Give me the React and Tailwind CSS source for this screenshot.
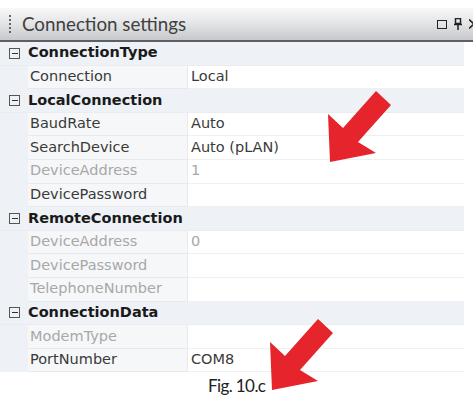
import React from 'react';

// property grid rows: category headers and name/value pairs
const rows = [
  { cat: 'ConnectionType' },
  { name: 'Connection', value: 'Local' },
  { cat: 'LocalConnection' },
  { name: 'BaudRate', value: 'Auto' },
  { name: 'SearchDevice', value: 'Auto (pLAN)' },
  { name: 'DeviceAddress', value: '1', disabled: true },
  { name: 'DevicePassword', value: '' },
  { cat: 'RemoteConnection' },
  { name: 'DeviceAddress', value: '0', disabled: true },
  { name: 'DevicePassword', value: '', disabled: true },
  { name: 'TelephoneNumber', value: '', disabled: true },
  { cat: 'ConnectionData' },
  { name: 'ModemType', value: '', disabled: true },
  { name: 'PortNumber', value: 'COM8' },
];

const CollapseBox = () => (
  <span className="w-[11px] h-[11px] border border-[#555] flex items-center justify-center mr-[8px] shrink-0">
    <span className="w-[6px] h-[1px] bg-[#333]" />
  </span>
);

const Arrow = ({ x, y }) => (
  <polygon
    transform={`translate(${x} ${y})`}
    points="0,0 -2,-48 13,-34 46,-71 61,-57 28,-20 46,-9"
    fill="#e5242b"
  />
);

const App = () => {
  return (
    <div className="relative w-[473px] h-[409px] bg-white overflow-hidden" style={{ fontFamily: '"DejaVu Sans", Verdana, sans-serif' }}>
      <div className="pt-[8px]">
        {/* docked panel header */}
        <div className="h-[34px] flex items-center bg-gradient-to-b from-[#f8f8f8] via-[#e3e4e6] to-[#c6c8cb] border-b-2 border-[#5c5f63] pl-[9px]">
          <div className="flex flex-col gap-[2px] mr-[11px]">
            <span className="w-[2px] h-[2px] bg-[#666]" />
            <span className="w-[2px] h-[2px] bg-[#666]" />
            <span className="w-[2px] h-[2px] bg-[#666]" />
            <span className="w-[2px] h-[2px] bg-[#666]" />
            <span className="w-[2px] h-[2px] bg-[#666]" />
          </div>
          <span className="text-[18.8px] text-[#404040]" style={{ fontFamily: 'Lato, sans-serif' }}>Connection settings</span>
          <div className="ml-auto flex items-center gap-[7px] mr-[-2px]">
            <span className="w-[10px] h-[9px] border-[1.5px] border-[#222]" />
            <svg width="8" height="12" viewBox="0 0 8 12">
              <rect x="1.5" y="0.5" width="5" height="5" fill="none" stroke="#222" strokeWidth="1.5" />
              <line x1="0" y1="6.5" x2="8" y2="6.5" stroke="#222" strokeWidth="1.5" />
              <line x1="4" y1="6.5" x2="4" y2="12" stroke="#222" strokeWidth="1.5" />
            </svg>
            <svg width="6" height="10" viewBox="0 0 6 10">
              <path d="M0 0.5 L5 5 L0 9.5" fill="none" stroke="#222" strokeWidth="1.6" />
            </svg>
          </div>
        </div>

        <div className="w-[464px]">
          {rows.map((r, i) =>
            r.cat ? (
              <div key={i} className="h-[23.6px] flex items-center bg-[#eef1f5] pl-[9px] border-b border-[#eaecef]">
                <CollapseBox />
                <span className="text-[14.5px] font-bold text-[#1a1a1a]">{r.cat}</span>
              </div>
            ) : (
              <div key={i} className="h-[23.6px] flex bg-[#eef1f5]">
                <div className="w-[28px] shrink-0" />
                <div className="w-[160px] flex items-center bg-[#f6f7f9] border-b border-r border-[#e7e9ec] pl-[2px]">
                  <span className={`text-[14.5px] ${r.disabled ? 'text-[#a8a8a8]' : 'text-[#3a3a3a]'}`}>{r.name}</span>
                </div>
                <div className="flex-1 flex items-center bg-white border-b border-[#eef0f2] pl-[3px]">
                  <span className={`text-[14.5px] ${r.disabled ? 'text-[#a8a8a8]' : 'text-[#3a3a3a]'}`}>{r.value}</span>
                </div>
              </div>
            )
          )}
        </div>

        <div className="flex pl-[208px] pt-[1px]">
          <span className="text-[17px] text-[#222] tracking-[-0.6px]" style={{ fontFamily: 'Lato, sans-serif' }}>Fig. 10.c</span>
        </div>
      </div>

      <svg className="absolute inset-0 pointer-events-none" width="473" height="409">
        <Arrow x={330} y={162} />
        <Arrow x={272} y={390} />
      </svg>
    </div>
  );
};

export default App;
